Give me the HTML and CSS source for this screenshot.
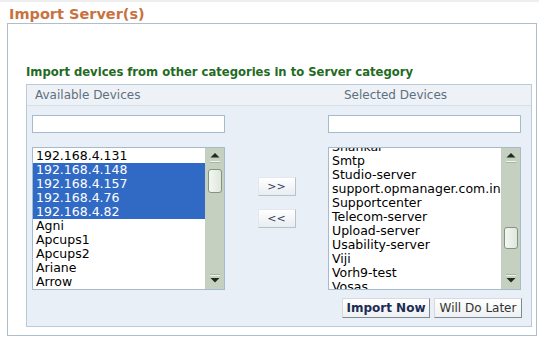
FILE: index.html
```html
<!DOCTYPE html>
<html>
<head>
<meta charset="utf-8">
<link rel="stylesheet" href="styles.css">
</head>
<body>
<div class="title">Import Server(s)</div>
<div class="box">
  <div class="heading">Import devices from other categories in to Server category</div>
  <div class="panel">
    <div class="panel-head">
      <div class="head-left">Available Devices</div>
      <div class="head-right">Selected Devices</div>
    </div>
    <div class="panel-body">
      <div class="columns">
        <div class="col">
          <input class="search" type="text">
          <div class="list">
            <div class="items">
              <div class="item">192.168.4.131</div>
              <div class="item sel">192.168.4.148</div>
              <div class="item sel">192.168.4.157</div>
              <div class="item sel">192.168.4.76</div>
              <div class="item sel">192.168.4.82</div>
              <div class="item">Agni</div>
              <div class="item">Apcups1</div>
              <div class="item">Apcups2</div>
              <div class="item">Ariane</div>
              <div class="item">Arrow</div>
            </div>
            <div class="scroll">
              <svg class="arrow" width="19" height="17" viewBox="0 0 19 17"><polygon points="10,5 14.5,9.5 5.5,9.5" fill="#1e2a1e"/><rect x="5" y="13" width="10" height="1" fill="#eef3ec"/><rect x="5" y="14" width="10" height="1" fill="#a9b6a6"/></svg>
              <div class="thumb thumb-left"></div>
              <svg class="arrow down" width="19" height="17" viewBox="0 0 19 17"><rect x="5" y="2" width="10" height="1" fill="#a9b6a6"/><rect x="5" y="3" width="10" height="1" fill="#eef3ec"/><polygon points="5.5,6 14.5,6 10,10.5" fill="#1e2a1e"/></svg>
            </div>
          </div>
        </div>
        <div class="mid">
          <button class="mv">&gt;&gt;</button>
          <button class="mv">&lt;&lt;</button>
        </div>
        <div class="col">
          <input class="search" type="text">
          <div class="list">
            <div class="items">
              <div class="shift">
                <div class="item">Shankar</div>
                <div class="item">Smtp</div>
                <div class="item">Studio-server</div>
                <div class="item">support.opmanager.com.in</div>
                <div class="item">Supportcenter</div>
                <div class="item">Telecom-server</div>
                <div class="item">Upload-server</div>
                <div class="item">Usability-server</div>
                <div class="item">Viji</div>
                <div class="item">Vorh9-test</div>
                <div class="item">Vosas</div>
              </div>
            </div>
            <div class="scroll">
              <svg class="arrow" width="19" height="17" viewBox="0 0 19 17"><polygon points="10,5 14.5,9.5 5.5,9.5" fill="#1e2a1e"/><rect x="5" y="13" width="10" height="1" fill="#eef3ec"/><rect x="5" y="14" width="10" height="1" fill="#a9b6a6"/></svg>
              <div class="thumb thumb-right"></div>
              <svg class="arrow down" width="19" height="17" viewBox="0 0 19 17"><rect x="5" y="2" width="10" height="1" fill="#a9b6a6"/><rect x="5" y="3" width="10" height="1" fill="#eef3ec"/><polygon points="5.5,6 14.5,6 10,10.5" fill="#1e2a1e"/></svg>
            </div>
          </div>
        </div>
      </div>
      <div class="actions">
        <button class="btn primary">Import Now</button>
        <button class="btn">Will Do Later</button>
      </div>
    </div>
  </div>
</div>
</body>
</html>
```

FILE: styles.css
```css
* { box-sizing: border-box; }
html, body { margin: 0; padding: 0; background: #fff; }
body {
  font-family: "DejaVu Sans", Verdana, sans-serif;
  border-top: 2px solid #eeeeee;
}
.title {
  margin: 4px 0 0 9px;
  font-size: 14.5px;
  font-weight: bold;
  line-height: 17px;
  color: #c8733f;
}
.box {
  margin-left: 7px;
  width: 530px;
  height: 313px;
  border: 1px solid #adbfcc;
  padding: 42px 0 0 18px;
}
.heading {
  font-size: 11.6px;
  font-weight: bold;
  line-height: 13px;
  color: #1f6b1f;
  margin: 0 0 5px;
  white-space: nowrap;
}
.panel {
  width: 506px;
  height: 243px;
  border: 1px solid #b9cad9;
  background: #e8eff7;
  display: flex;
  flex-direction: column;
}
.panel-head {
  display: flex;
  height: 21px;
  background: #eef2f6;
  border-bottom: 1px solid #d4dfea;
  font-size: 12px;
  line-height: 20px;
  color: #5f6f80;
}
.head-left { width: 233px; padding-left: 8px; }
.head-right { flex: 1; text-align: center; }
.panel-body { padding: 9px 9px 0 5px; }
.columns { display: flex; }
.col {
  width: 193px;
  display: flex;
  flex-direction: column;
  gap: 14px;
}
.search {
  display: block;
  width: 193px;
  height: 18px;
  margin: 0;
  border: 1px solid #a7bacb;
  background: #fff;
  outline: none;
}
.list {
  height: 143px;
  border: 1px solid #a7bacb;
  background: #fff;
  display: flex;
}
.items {
  flex: 1;
  overflow: hidden;
  padding-top: 1px;
  font-size: 12.5px;
  line-height: 14px;
  color: #000;
}
.shift { margin-top: -9px; }
.item { padding-left: 3px; white-space: nowrap; }
.item.sel { background: #316ac5; color: #fff; }
.scroll {
  width: 19px;
  background: #c5d0c1;
  display: flex;
  flex-direction: column;
}
.arrow { display: block; flex: none; }
.arrow.down { margin-top: auto; }
.thumb {
  width: 14px;
  margin-left: 3px;
  border: 1px solid #839383;
  border-radius: 3px;
  background: linear-gradient(90deg, #f4f7f2, #dfe6dc);
}
.thumb-left { margin-top: 4px; height: 24px; }
.thumb-right { margin-top: 62px; height: 22px; }
.mid {
  width: 103px;
  display: flex;
  flex-direction: column;
  align-items: center;
  padding-top: 62px;
  gap: 13px;
}
.mv {
  width: 38px;
  height: 19px;
  padding: 0;
  font-family: "DejaVu Sans", Verdana, sans-serif;
  font-size: 11px;
  color: #34405a;
  background: linear-gradient(#ffffff, #e9edf1);
  border: 1px solid;
  border-color: #e4e8ec #b8c2cc #b8c2cc #e4e8ec;
}
.actions {
  display: flex;
  justify-content: flex-end;
  gap: 4px;
  margin-top: 8px;
}
.btn {
  width: 88px;
  height: 20px;
  padding: 0;
  font-family: "DejaVu Sans", Verdana, sans-serif;
  font-size: 12px;
  color: #333;
  background: linear-gradient(#ffffff, #eef0f2);
  border: 1px solid;
  border-color: #d6dade #7f8a96 #7f8a96 #d6dade;
}
.btn.primary { font-weight: bold; color: #1c2c56; }
```
